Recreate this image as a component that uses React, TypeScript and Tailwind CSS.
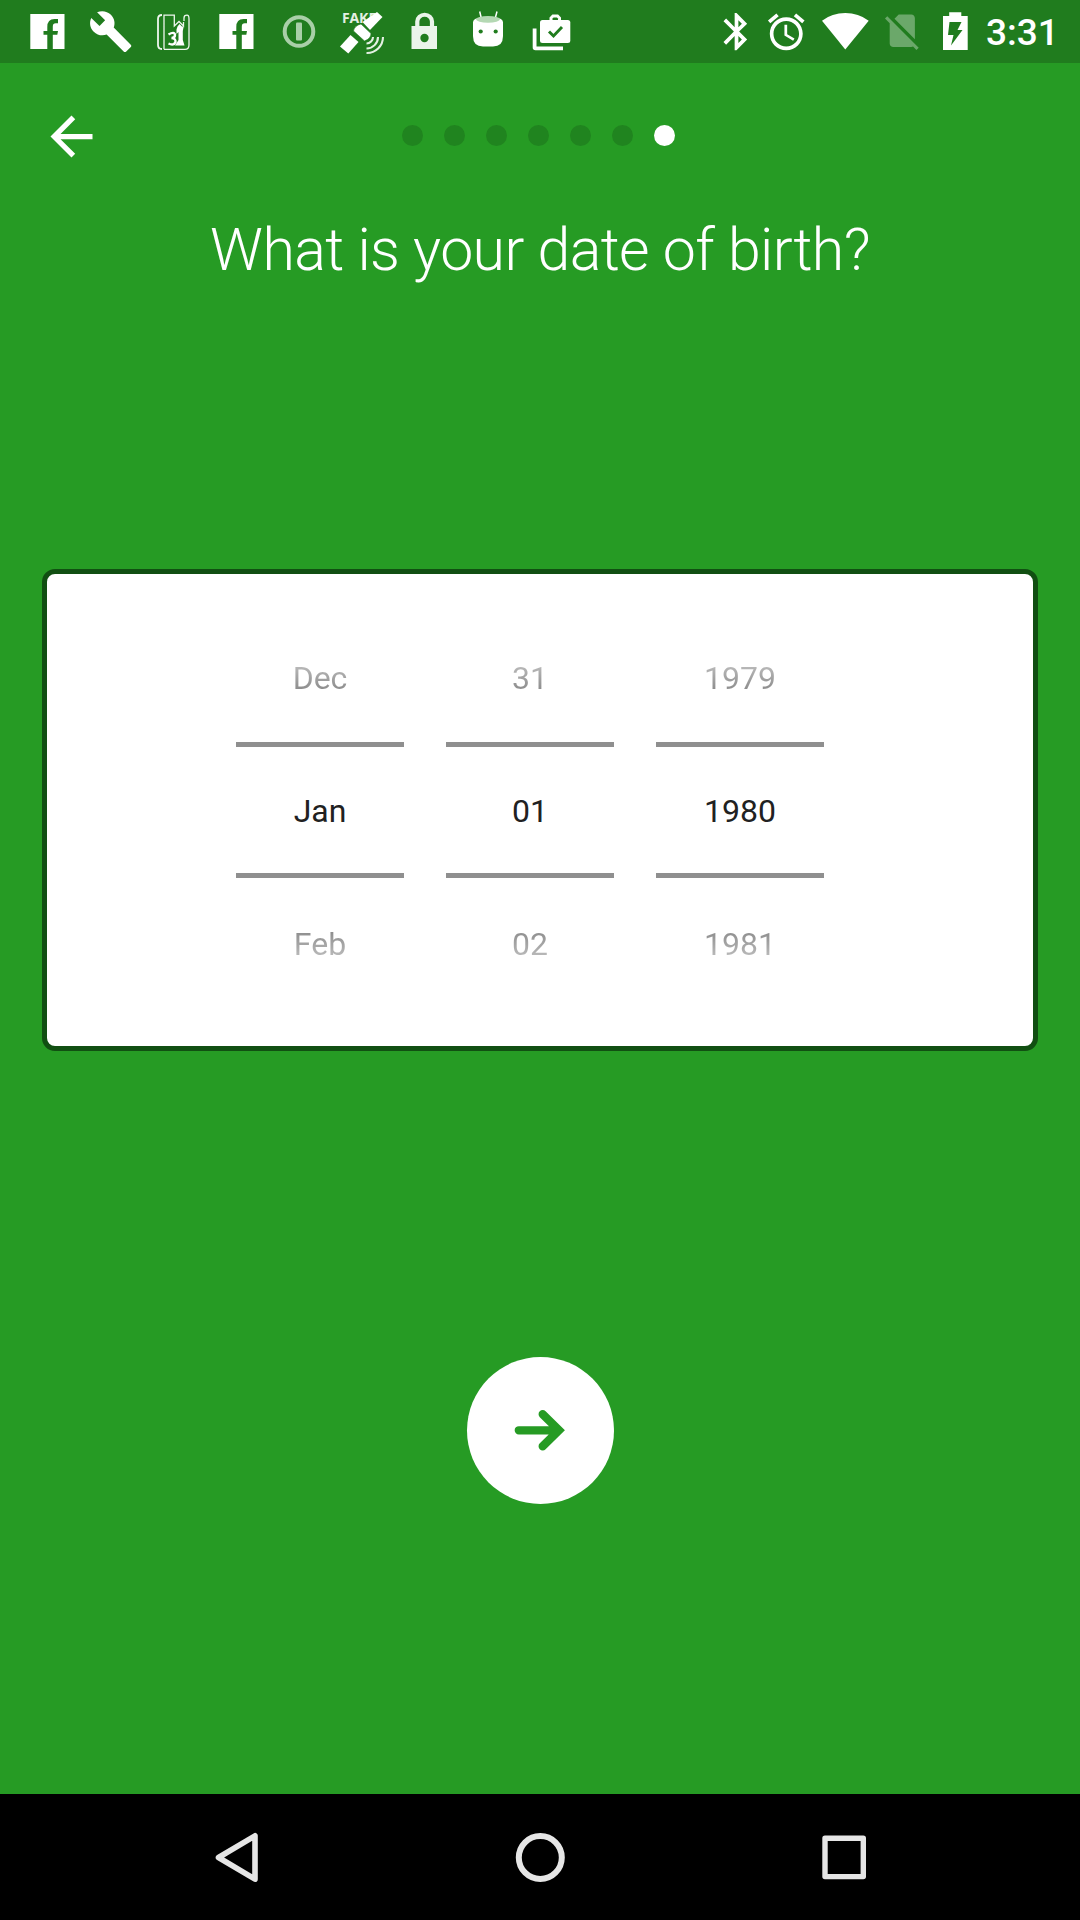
import type { ReactNode } from "react";

const BAR = "#207c1e";

function StatusIcon({ x, w = 63, children }: { x: number; w?: number; children: ReactNode }) {
  return (
    <svg width={w} height={63} viewBox={`${x} 0 ${w} 63`} fill="#fff" className="shrink-0">
      {children}
    </svg>
  );
}

function Facebook() {
  return (
    <svg width={63} height={63} viewBox="16 0 63 63" className="shrink-0">
      <path fill="#fff" d="M30.300 14H64.500V49H30.300z" />
      <path fill={BAR} d="M47.300 49V34.700H43.500V31H47.300V27Q47.300 19 54.500 19H58V23.200H55.800Q52.800 23.200 52.800 26.500V31H58L57.300 34.700H52.800V49z" />
    </svg>
  );
}

function StatusBar() {
  return (
    <header className="flex h-[63px] bg-[#207c1e] pl-4">
      <Facebook />
      <StatusIcon x={79}>
        <path
          transform="translate(88.300 9.100) scale(1.870)"
          d="M22.700 19l-9.100-9.100c.9-2.300.4-5-1.500-6.900-2-2-5-2.400-7.400-1.300L9 6 6 9 1.600 4.700C.4 7.100.9 10.100 2.900 12.100c1.900 1.900 4.600 2.400 6.900 1.500l9.100 9.100c.4.4 1 .4 1.400 0l2.300-2.300c.5-.4.5-1.100.1-1.400z"
        />
      </StatusIcon>
      <StatusIcon x={142}>
        <g fill="none" stroke="#eef6ee" strokeWidth="1.300">
          <path d="M162 15Q158 15 158 19V45Q158 49 162 49" strokeWidth="1.800" />
          <path d="M164 49.300V15.200H174.300V26L179 21.500 183.500 26V22" />
          <path d="M184 21V18Q184 15.200 187 15.200 189 15.200 189 19V45Q189 49.300 185 49.300H164" />
        </g>
        <path d="M177.500 26.500L179.500 24 182 26.500H183.700L182.800 31V40L184.500 45.500H175L178.500 40V32L176.500 34V29.500z" />
        <path d="M168.500 34.500Q174.500 31 175 35 175 38 171.500 38 176 38.500 175.500 42 174 46 168.500 43.500" fill="none" stroke="#fff" strokeWidth="2.400" />
      </StatusIcon>
      <Facebook />
      <StatusIcon x={268}>
        <circle cx="299" cy="31.500" r="14.300" fill="none" stroke="#a9cfa8" strokeWidth="4" />
        <rect x="296" y="22.500" width="6" height="18" rx="1" fill="#a9cfa8" />
      </StatusIcon>
      <StatusIcon x={331}>
        <text x="342" y="23" fontSize="14" fontWeight="700" fontFamily="Noto Sans, sans-serif" fill="#e3f0e2">FAKE</text>
        <path d="M377 12L382.500 17 370 30 362.500 22z" />
        <path d="M361 24L371 33.500Q371 38.500 364.500 41L353.500 31Q354.500 25.500 361 24z" stroke={BAR} strokeWidth=".6" />
        <path d="M350.500 35L358.500 42 348.300 53.500 340 46.500z" />
        <g fill="none" stroke="#e3f0e2" strokeWidth="2.100">
          <path d="M373 37A6.500 6.500 0 0 1 366.500 43.500" />
          <path d="M378 37A11.500 11.500 0 0 1 366.500 48.500" />
          <path d="M383 37A16 16 0 0 1 366.500 53" />
        </g>
      </StatusIcon>
      <StatusIcon x={394}>
        <path d="M417.300 28V21.500A7.300 6.700 0 0 1 432 21.500V28" fill="none" stroke="#eaf4ea" strokeWidth="4.200" />
        <path d="M411.500 26H437V49H411.500z" fill="#eaf4ea" />
        <circle cx="424.500" cy="38" r="4.200" fill={BAR} />
      </StatusIcon>
      <StatusIcon x={457}>
        <path d="M481.500 19L479.700 11.500M495 19L497 11.500" stroke="#fff" strokeWidth="1.500" />
        <path d="M473 22Q474 18.500 477 18.500H499Q502 18.500 503 22V36Q503 46.500 493 46.500H483Q473 46.500 473 36z" />
        <ellipse cx="488" cy="19.300" rx="12" ry="3.400" fill="#b4d8b3" />
        <circle cx="480.700" cy="31.500" r="2.100" fill={BAR} />
        <circle cx="495.700" cy="31.500" r="2.100" fill={BAR} />
      </StatusIcon>
      <StatusIcon x={520} w={62}>
        <path d="M532.700 28.500H536.500V46.500H563V50.300H535.500Q532.700 50.300 532.700 47.500z" />
        <rect x="540" y="20" width="30.300" height="23" rx="2.500" />
        <path d="M551 21V18L553 16H557.500L559.500 18V21" fill="none" stroke="#fff" strokeWidth="3" />
        <path d="M549 31.500L553.500 36 562 27" fill="none" stroke={BAR} strokeWidth="2.900" />
      </StatusIcon>

      <div className="ml-auto flex">
        <StatusIcon x={712} w={48}>
          <path
            transform="translate(714.200 9.300) scale(1.860)"
            d="M17.710 7.710L12 2h-1v7.590L6.410 5 5 6.410 10.590 12 5 17.590 6.410 19 11 14.410V22h1l5.710-5.710-4.300-4.290 4.300-4.290zM13 5.830l1.880 1.880L13 9.590V5.830zm1.880 10.460L13 18.170v-3.760l1.880 1.880z"
          />
        </StatusIcon>
        <StatusIcon x={760} w={52}>
          <path
            transform="translate(764.300 10) scale(1.830)"
            d="M22 5.720l-4.600-3.860-1.290 1.530 4.600 3.860L22 5.720zM7.880 3.390L6.600 1.860 2 5.710l1.290 1.530 4.590-3.850zM12.500 8H11v6l4.750 2.850.75-1.230-4-2.370V8zM12 4c-4.970 0-9 4.030-9 9s4.020 9 9 9c4.970 0 9-4.030 9-9s-4.030-9-9-9zm0 16c-3.870 0-7-3.130-7-7s3.130-7 7-7 7 3.130 7 7-3.130 7-7 7z"
          />
        </StatusIcon>
        <StatusIcon x={812} w={66}>
          <path d="M845.300 49.500L822 20.700Q832 13 845.300 13 858.500 13 868.700 20.700z" />
        </StatusIcon>
        <StatusIcon x={878} w={50}>
          <path
            fill="#6ba86a"
            transform="translate(880.700 9.200) scale(1.800)"
            d="M18.990 5c0-1.100-.89-2-1.990-2h-7L7.660 5.340 19 16.680 18.990 5zM3.650 3.880L2.380 5.150 5 7.770V19c0 1.100.9 2 2 2h10.010c.35 0 .67-.1.96-.26l1.880 1.880 1.270-1.270L3.650 3.880z"
          />
        </StatusIcon>
        <StatusIcon x={928} w={58}>
          <path d="M943 16H949.200V12.300H961.300V16H967.700V50H943z" />
          <path d="M949.500 22H961.500L957.500 30H962.500L951 45.500 953.500 35H948z" fill={BAR} />
        </StatusIcon>
        <time className="w-[94px] pt-[10px] text-[37px] leading-[46px] font-medium text-white">3:31</time>
      </div>
    </header>
  );
}

const columns = [
  ["Dec", "Jan", "Feb"],
  ["31", "01", "02"],
  ["1979", "1980", "1981"],
];

function Wheel({ values }: { values: string[] }) {
  return (
    <div className="flex w-[168px] flex-col text-center text-[32px]">
      <div className="h-[106px] bg-linear-to-b from-[#b8b8b8] from-29% to-[#8e8e8e] to-50% bg-clip-text pt-[14px] leading-[56px] text-transparent">
        {values[0]}
      </div>
      <div className="flex h-[136px] items-center justify-center border-y-[5px] border-[#8f8f8f] pt-[2px] text-[#212121]">
        {values[1]}
      </div>
      <div className="bg-linear-to-b from-[#8e8e8e] from-57% to-[#b8b8b8] to-82% bg-clip-text pt-[38px] leading-[56px] text-transparent">
        {values[2]}
      </div>
    </div>
  );
}

export default function App() {
  return (
    <div className="flex h-[1920px] w-[1080px] flex-col overflow-hidden bg-[#269b24] font-['Roboto',sans-serif]">
      <StatusBar />
      <main className="flex flex-1 flex-col items-center">
        <div className="grid h-[147px] w-full grid-cols-[402px_1fr] items-center">
          <button aria-label="Back" className="ml-[40px]">
            <svg width={63} height={63} viewBox="0 0 24 24" fill="#fff">
              <path d="M20 11H7.830l5.590-5.590L12 4l-8 8 8 8 1.410-1.410L7.830 13H20v-2z" />
            </svg>
          </button>
          <div className="flex gap-[21px] pb-[3px]">
            {[0, 1, 2, 3, 4, 5].map((i) => (
              <span key={i} className="size-[21px] rounded-full bg-[#20841f]" />
            ))}
            <span className="size-[21px] rounded-full bg-white" />
          </div>
        </div>
        <h1 className="mt-[5px] text-[59px] leading-[70px] font-light tracking-[-0.600px] text-white">What is your date of birth?</h1>
        <section className="mt-[284px] flex h-[482px] w-[996px] gap-[42px] rounded-[13px] border-[5px] border-[#114f12] bg-white pt-[62px] pl-[189px]">
          {columns.map((values) => (
            <Wheel key={values[1]} values={values} />
          ))}
        </section>
        <button aria-label="Next" className="mt-[305.500px] flex size-[147px] items-center justify-center rounded-full bg-white">
          <svg width={60} height={60} viewBox="510 1400 60 60" fill="none" stroke="#269b24" strokeWidth="8.300" strokeLinecap="round">
            <path d="M518.800 1430.300H556M542.700 1414.200L559 1430.300 542.700 1446.300" />
          </svg>
        </button>
      </main>
      <nav className="flex h-[126px] items-center justify-center gap-[240px] bg-black">
        <svg width={64} height={64} viewBox="204 1825 64 64" fill="none" stroke="#e6e6e6" strokeWidth="5.600" strokeLinejoin="round">
          <path d="M255 1835.800V1879.200L218.500 1857.500z" />
        </svg>
        <svg width={64} height={64} viewBox="508 1825 64 64" fill="none" stroke="#e6e6e6" strokeWidth="6">
          <circle cx="540.300" cy="1857.500" r="21.500" />
        </svg>
        <svg width={64} height={64} viewBox="812 1825 64 64" fill="none" stroke="#e6e6e6" strokeWidth="5.400" strokeLinejoin="round">
          <path d="M825 1838.200H863.300V1876.600H825z" />
        </svg>
      </nav>
    </div>
  );
}
